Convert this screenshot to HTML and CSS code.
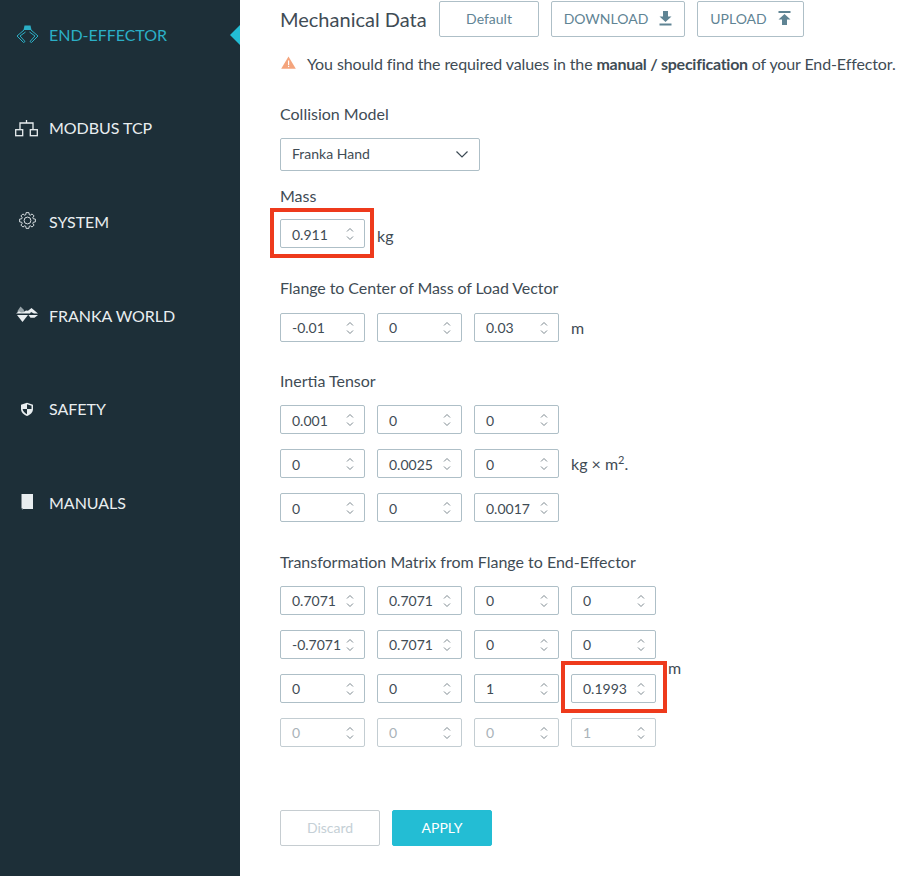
FILE: index.html
```html
<!DOCTYPE html>
<html lang="en">
<head>
<meta charset="utf-8">
<title>End-Effector</title>
<link rel="stylesheet" href="styles.css">
</head>
<body>
<div class="app">
  <nav class="sidebar">
    <a class="nav-item active">
      <span class="nav-icon"><svg width="32" height="24" viewBox="0 0 32 24" fill="none" stroke="currentColor" stroke-width="1"><path d="M13.500 8 14.500 3.500h6L21.500 8Z" fill="currentColor" stroke="none"/><path d="M14 8 7 14l6.500 6.500 1.500-1-5-5.500 5.500-4M21 8l7 6-6.500 6.500-1.500-1 5-5.500-5.500-4"/></svg></span>
      <span>END-EFFECTOR</span>
    </a>
    <a class="nav-item">
      <span class="nav-icon"><svg width="32" height="24" viewBox="0 0 32 24" fill="none" stroke="currentColor" stroke-width="1.300"><path d="M10 13V7h13v6M16.500 7V4"/><rect x="5.700" y="13.700" width="7" height="6"/><rect x="20.300" y="13.700" width="7" height="6"/></svg></span>
      <span>MODBUS TCP</span>
    </a>
    <a class="nav-item">
      <span class="nav-icon"><svg width="32" height="24" viewBox="0 0 32 24" fill="none" stroke="currentColor" stroke-width=".9" stroke-linejoin="round"><g transform="translate(17.500 11.500)"><path d="M5.740-1.750 7.880-1.390V1.390L5.740 1.750 5.300 2.820 6.550 4.590 4.590 6.550 2.820 5.300 1.750 5.740 1.390 7.880H-1.390L-1.750 5.740-2.820 5.300-4.590 6.550-6.550 4.590-5.300 2.820-5.740 1.750-7.880 1.390V-1.390L-5.740-1.750-5.300-2.820-6.550-4.590-4.590-6.550-2.820-5.300-1.750-5.740-1.390-7.880H1.390L1.750-5.740 2.820-5.300 4.590-6.550 6.550-4.590 5.300-2.820Z"/><circle r="3.400"/></g></svg></span>
      <span>SYSTEM</span>
    </a>
    <a class="nav-item">
      <span class="nav-icon"><svg width="32" height="24" viewBox="0 0 32 24" fill="currentColor"><path d="M7.500 8 10.500 3.500 13.500 6.500 15 10H8Z" fill="#98a4a9"/><path d="M6 10.600 9 8.300 11 9.500 13.500 9.200 16 7.500 18 7.800 21.500 5 28 10.600H24L21 9 20 10.600H14Z"/><path d="M7 12H18L12.500 19Z"/><path d="M18.500 12H28L24.500 14.800H20.500Z"/></svg></span>
      <span>FRANKA WORLD</span>
    </a>
    <a class="nav-item">
      <span class="nav-icon"><svg width="32" height="24" viewBox="0 0 32 24"><path fill="currentColor" d="M17 5.700 23 7.700v4c0 3.500-2.500 5.800-6 7.300-3.500-1.500-6-3.800-6-7.300v-4Z"/><path fill="#1d2f38" d="M17 7.300 21.500 8.800V12H17ZM12.600 12H17V17.200C14.700 16.100 13 14.500 12.600 12Z"/></svg></span>
      <span>SAFETY</span>
    </a>
    <a class="nav-item">
      <span class="nav-icon"><svg width="32" height="24" viewBox="0 0 32 24"><path fill="currentColor" d="M11.500 4H23V19H13L11.500 18Z"/><path fill="#9aa5aa" d="M11.500 18 13 19V19.500H12Z"/></svg></span>
      <span>MANUALS</span>
    </a>
    <span class="nav-caret"></span>
  </nav>

  <main class="content">
    <header class="title-row">
      <h1 class="title">Mechanical Data</h1>
      <button class="btn btn-default">Default</button>
      <button class="btn btn-download">DOWNLOAD
        <svg width="13" height="16" viewBox="0 0 13 16" fill="currentColor"><path d="M4 1h5v5.500h3.500L6.500 12 .5 6.500H4Z"/><rect x="0.500" y="13.500" width="12" height="2"/></svg>
      </button>
      <button class="btn btn-upload">UPLOAD
        <svg width="13" height="16" viewBox="0 0 13 16" fill="currentColor"><rect x="0.500" y="1" width="12" height="2"/><path d="M4 15h5V9.500h3.500L6.500 4 .5 9.500H4Z"/></svg>
      </button>
    </header>

    <p class="alert">
      <svg class="alert-icon" width="15" height="13" viewBox="0 0 15 13"><path fill="#f4a47c" d="M7.500 0.500 14.800 12.800H.2Z"/><rect fill="#fff" x="7" y="4.500" width="1.200" height="4.500"/><rect fill="#fff" x="7" y="9.800" width="1.200" height="1.300"/></svg>
      <span>You should find the required values in the <strong>manual / specification</strong> of your End-Effector.</span>
    </p>

    <section class="sec-collision">
      <div class="label">Collision Model</div>
      <div class="select">
        <span class="select-text">Franka Hand</span>
        <svg width="12" height="7" viewBox="0 0 12 7" fill="none" stroke="#3c4a54" stroke-width="1.200"><path d="M.5.500l5.500 5.500 5.500-5.500"/></svg>
      </div>
    </section>

    <section class="sec-mass">
      <div class="label label-tight">Mass</div>
      <div class="row">
        <div class="num has-mark mark-mass">0.911<svg class="spin"><use href="#spin"/></svg><span class="mark"></span></div>
        <span class="unit unit-low">kg</span>
      </div>
    </section>

    <section class="sec-flange">
      <div class="label label-narrow">Flange to Center of Mass of Load Vector</div>
      <div class="row">
        <div class="num">-0.01<svg class="spin"><use href="#spin"/></svg></div>
        <div class="num">0<svg class="spin"><use href="#spin"/></svg></div>
        <div class="num">0.03<svg class="spin"><use href="#spin"/></svg></div>
        <span class="unit">m</span>
      </div>
    </section>

    <section class="sec-inertia">
      <div class="label">Inertia Tensor</div>
      <div class="rows">
        <div class="row">
          <div class="num">0.001<svg class="spin"><use href="#spin"/></svg></div>
          <div class="num">0<svg class="spin"><use href="#spin"/></svg></div>
          <div class="num">0<svg class="spin"><use href="#spin"/></svg></div>
        </div>
        <div class="row">
          <div class="num">0<svg class="spin"><use href="#spin"/></svg></div>
          <div class="num">0.0025<svg class="spin"><use href="#spin"/></svg></div>
          <div class="num">0<svg class="spin"><use href="#spin"/></svg></div>
          <span class="unit">kg × m<sup>2</sup>.</span>
        </div>
        <div class="row">
          <div class="num">0<svg class="spin"><use href="#spin"/></svg></div>
          <div class="num">0<svg class="spin"><use href="#spin"/></svg></div>
          <div class="num">0.0017<svg class="spin"><use href="#spin"/></svg></div>
        </div>
      </div>
    </section>

    <section class="sec-matrix">
      <div class="label">Transformation Matrix from Flange to End-Effector</div>
      <div class="rows">
        <div class="row">
          <div class="num">0.7071<svg class="spin"><use href="#spin"/></svg></div>
          <div class="num">0.7071<svg class="spin"><use href="#spin"/></svg></div>
          <div class="num">0<svg class="spin"><use href="#spin"/></svg></div>
          <div class="num">0<svg class="spin"><use href="#spin"/></svg></div>
        </div>
        <div class="row">
          <div class="num">-0.7071<svg class="spin"><use href="#spin"/></svg></div>
          <div class="num">0.7071<svg class="spin"><use href="#spin"/></svg></div>
          <div class="num">0<svg class="spin"><use href="#spin"/></svg></div>
          <div class="num">0<svg class="spin"><use href="#spin"/></svg></div>
        </div>
        <div class="row">
          <div class="num">0<svg class="spin"><use href="#spin"/></svg></div>
          <div class="num">0<svg class="spin"><use href="#spin"/></svg></div>
          <div class="num">1<svg class="spin"><use href="#spin"/></svg></div>
          <div class="num has-mark mark-matrix">0.1993<svg class="spin"><use href="#spin"/></svg><span class="mark"></span></div>
          <span class="unit unit-high">m</span>
        </div>
        <div class="row">
          <div class="num disabled">0<svg class="spin"><use href="#spin"/></svg></div>
          <div class="num disabled">0<svg class="spin"><use href="#spin"/></svg></div>
          <div class="num disabled">0<svg class="spin"><use href="#spin"/></svg></div>
          <div class="num disabled">1<svg class="spin"><use href="#spin"/></svg></div>
        </div>
      </div>
    </section>

    <footer class="actions">
      <button class="btn btn-discard">Discard</button>
      <button class="btn btn-apply">APPLY</button>
    </footer>
  </main>
</div>
<svg class="defs" width="0" height="0">
  <symbol id="spin" viewBox="0 0 8 14"><path d="M1 4.500 4 1.500l3 3M1 9.500l3 3 3-3" fill="none" stroke="currentColor" stroke-width=".9"/></symbol>
</svg>
</body>
</html>
```
FILE: styles.css
```css
* { box-sizing: border-box; }
html, body { margin: 0; padding: 0; height: 100%; overflow: hidden; background: #fff; }
body { font-family: Lato, "Liberation Sans", sans-serif; color: #3f4c55; font-size: 15px; }
.app { display: flex; width: 910px; height: 876px; overflow: hidden; }

.sidebar { position: relative; flex: 0 0 240px; height: 876px; background: #1d2f38; color: #f0f4f5; }
.nav-item { display: flex; align-items: center; height: 93.6px; padding-left: 10px; font-size: 16px; letter-spacing: -.03px; color: #e9eef0; }
.nav-item:first-child { margin-top: -12.5px; }
.nav-item.active { color: #2bafc6; }
.nav-icon { flex: 0 0 39px; display: flex; height: 24px; }
.nav-caret { position: absolute; left: 230px; top: 25px; width: 0; height: 0; border-style: solid; border-width: 10px 10px 10px 0; border-color: transparent #23bdd4 transparent transparent; }

.content { flex: 1; min-width: 0; padding: 1px 0 0 40px; }
.title-row { display: flex; align-items: center; height: 36px; }
.title { margin: 0 12px 0 0; font-size: 20px; font-weight: 400; color: #3f4c55; line-height: 36px; width: 147px; white-space: nowrap; }
.btn { display: inline-flex; align-items: center; justify-content: center; height: 36px; border: 1px solid #aebfc7; border-radius: 2px; background: #fff; font-family: inherit; font-size: 14px; color: #5f8494; padding: 0 0 2px; }
.btn svg { margin-left: 11px; }
.btn-default { width: 100px; }
.btn-download { width: 134px; margin-left: 12px; }
.btn-upload { width: 107px; margin-left: 12px; }

.alert { display: flex; align-items: center; margin: 17px 0 0; height: 20px; font-size: 16px; line-height: 20px; white-space: nowrap; letter-spacing: -.11px; }
.alert-icon { margin: -4px 11px 0 1px; flex: none; }
.alert strong { font-weight: 700; letter-spacing: -.26px; }

.label { font-size: 16px; line-height: 20px; white-space: nowrap; }
.label-narrow { letter-spacing: -.08px; }
.sec-collision { margin-top: 30px; }
.select { display: flex; align-items: center; justify-content: space-between; width: 200px; height: 33px; margin-top: 14px; padding: 0 11px; border: 1px solid #aebfc7; border-radius: 2px; font-size: 14px; }
.select-text { margin-bottom: 2px; }

.sec-mass { margin-top: 15px; }
.sec-mass .row { margin-top: 13px; }
.sec-mass .num { padding-top: 2px; }
.sec-flange { margin-top: 30px; }
.sec-flange .row { margin-top: 15px; }
.sec-inertia { margin-top: 29px; }
.sec-inertia .rows { margin-top: 14px; }
.sec-inertia .num { padding-top: 2px; }
.sec-matrix { margin-top: 30px; }
.sec-matrix .rows { margin-top: 14px; }

.rows { display: flex; flex-direction: column; gap: 15px; }
.row { display: flex; align-items: center; gap: 12px; height: 29px; }
.num { position: relative; display: flex; align-items: center; flex: 0 0 85px; height: 29px; padding-left: 11px; border: 1px solid #aebfc7; border-radius: 2px; font-size: 14px; background: #fff; white-space: nowrap; }
.spin { position: absolute; right: 10px; top: 7px; width: 8px; height: 14px; color: #6d7a82; }
.num.disabled { color: #a9b3b9; border-color: #c3cdd2; }
.unit { font-size: 16px; line-height: 20px; white-space: nowrap; }
.unit sup { font-size: 11px; line-height: 0; }
.unit-low { margin-top: 5px; }
.unit-high { align-self: flex-start; margin-top: -16px; }

.mark { position: absolute; border: 4px solid #ee3a1c; pointer-events: none; }
.mark-mass .mark { left: -11px; right: -10px; top: -12px; bottom: -11px; }
.mark-matrix .mark { left: -11px; right: -12px; top: -14px; bottom: -11px; }

.actions { display: flex; gap: 12px; margin-top: 63px; }
.btn-discard { width: 100px; color: #c5d0d6; border-color: #c6cdd1; }
.btn-apply { width: 100px; background: #23bdd4; border-color: #23bdd4; color: #fff; }
.defs { position: absolute; }
```
